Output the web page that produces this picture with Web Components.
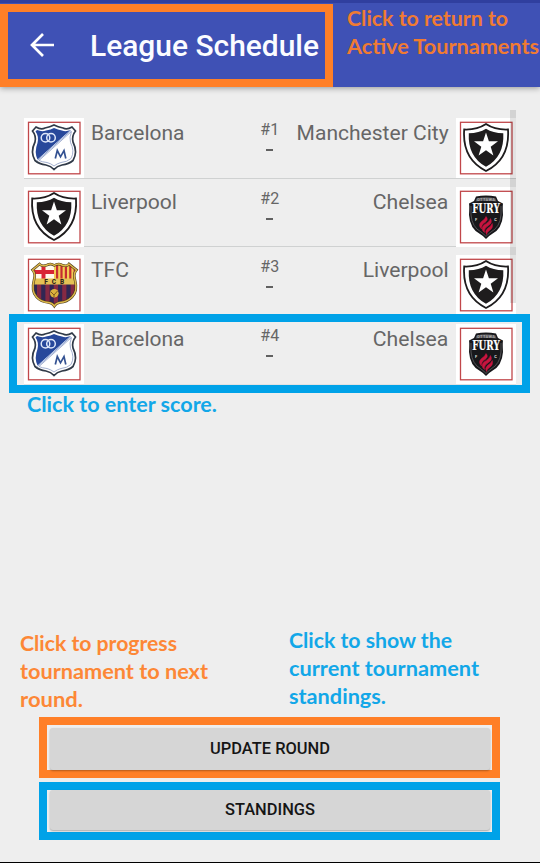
<!DOCTYPE html>
<html lang="en">
<head>
<meta charset="utf-8">
<title>League Schedule</title>
<style>
html,body{margin:0;padding:0;background:#eee}
body{font-family:Roboto,"Noto Sans",sans-serif;width:540px;height:863px;overflow:hidden}
</style>
</head>
<body>
<league-screen></league-screen>
<script>
const define = (name, html, init) => customElements.define(name, class extends HTMLElement {
  connectedCallback() {
    if (this.shadowRoot) return;
    const root = this.attachShadow({mode: 'open'});
    root.innerHTML = typeof html === 'function' ? html(this) : html;
    if (init) init(this, root);
  }
});

/* A single line of text, scaled horizontally to the width given in "w". */
define('fit-text', `<style>
:host{display:block;white-space:nowrap}
span{display:inline-block;transform-origin:0 50%}
:host([align=right]){text-align:right}
:host([align=right]) span{transform-origin:100% 50%}
</style><span><slot></slot></span>`, (el, root) => {
  const s = root.querySelector('span');
  const natural = s.offsetWidth, w = +el.getAttribute('w');
  if (w && natural) s.style.transform = `scaleX(${w / s.getBoundingClientRect().width})`;
});

/* Coloured annotation, one line per fit-text. */
define('hint-note', `<style>
:host{display:block;font:700 21.2px/28px Lato,"Open Sans",sans-serif;color:#ff7f27}
:host([tone=blue]){color:#00a2e8}
:host{opacity:.92}
</style><slot></slot>`);

define('call-out', `<style>
:host{display:block;box-sizing:border-box;border:8px solid #ff7f27}
:host([tone=blue]){border-color:#00a2e8}
</style><slot></slot>`);

const stripes = (x0, x1, y, h, w, c) => {
  let s = '';
  for (let x = x0; x < x1; x += w * 2) s += `<rect x="${x}" y="${y}" width="${w}" height="${h}" fill="${c}"/>`;
  return s;
};
const crests = {
  blue: `<path d="M12 9Q17 12 21 10Q26 9 30 7Q34 9 39 10Q43 12 48 9L51.500 13Q47.500 18 49 24Q54 34 49 42.500Q45 46 38 47Q33 48 30 51.500Q27 48 22 47Q15 46 11 42.500Q6 34 11 24Q12.500 18 8.500 13Z" fill="#fff" stroke="#303a48" stroke-width="1.700"/>
<path d="M13 12Q18 14 22 12.500Q27 11.500 30 10Q34 11.500 38 12.500Q42 14 46.500 12L13.500 41.500Q10 34 13.500 25Q15 18 11.500 13.500Z" fill="#27489b"/>
<path d="M47.500 13.500Q45 19 46.500 24.500Q51 33 47 40.500Q43 44 37 44.500Q33 45.500 30 48Q27 45.500 23 44.500Q18 44 15 42.500Z" fill="#fff" stroke="#8b9cc4" stroke-width=".8"/>
<path d="M47 12.500L13.500 42.500" stroke="#8aa0d0" stroke-width="1"/>
<g fill="none" stroke="#dfe8fa" stroke-width="1.500"><circle cx="21.500" cy="19.800" r="4.300"/><circle cx="27" cy="19.800" r="4.300"/></g>
<path d="M31.300 40.500L33.300 32.500L36.500 38.800L40 32.500L41.800 40.500" fill="none" stroke="#345292" stroke-width="1.700"/>`,
  star: `<path d="M8.200 11.500Q21 12 30 6Q39 12 52 11.500Q54 41 30 53Q6 41 8.200 11.500Z" fill="#fff" stroke="#1e1c1d" stroke-width="1.800"/>
<path d="M12.800 15.200Q23 15 30 10.700Q37 15 47.300 15.200Q48.500 38.500 30 48.800Q11.500 38.500 12.800 15.200Z" fill="#1e1c1d"/>
<path d="M30 14.500L32.900 23.200L42 23.300L34.700 28.700L37.400 37.400L30 32.200L22.600 37.400L25.300 28.700L18 23.300L27.100 23.200Z" fill="#fff"/>`,
  fury: `<path d="M20 9.500Q30 7.500 40 9.500L42 14L47 16.500Q46.500 20 47 28Q46 42 36 47Q32.500 49 30 52Q27.500 49 24 47Q14 42 13 28Q13.500 20 13 16.500L18 14Z" fill="#17171a"/>
<path d="M15 19V28Q16 40 25 45Q28 47 30 49.500Q32 47 35 45Q44 40 45 28V19" fill="none" stroke="#77777b" stroke-width=".6"/>
<path d="M20.500 11.500Q30 9 39.500 11.500L40.500 14.500Q30 13 19.500 14.500Z" fill="#55555a"/>
<text x="30" y="14" text-anchor="middle" font-family="Roboto,sans-serif" font-weight="700" font-size="4" textLength="18" fill="#aaa">OTTAWA</text>
<text x="30" y="25.800" text-anchor="middle" font-family="DejaVu Serif,serif" font-weight="700" font-size="12" textLength="27.500" lengthAdjust="spacingAndGlyphs" fill="#fff" stroke="#fff" stroke-width=".2">FURY</text>
<g font-family="Roboto,sans-serif" font-weight="700" font-size="4" fill="#ddd"><text x="19" y="34">F</text><text x="38.300" y="34">C</text></g>
<path d="M30 29.500Q33 32.500 29 35.500Q25 38 25.500 42Q21.500 38 25.500 34.500Q29.500 32 30 29.500ZM34.500 31.500Q37 35.500 32.500 38.500Q27.500 41.500 28.500 45.500Q24 42 28 38Q33.500 35 34.500 31.500ZM36.300 36.500Q37.500 41 33.500 43.500Q31 45 30.500 47.500Q28.500 44.500 31.500 41.500Q35.500 39 36.300 36.500Z" fill="#c8143f" stroke="#c8143f" stroke-width=".5"/>`,
  fcb: `<defs><clipPath id="c"><path d="M15.500 9Q18 12 23 10Q27 8 30.300 10.500Q34 8 38 10Q43 12 45 9L52.500 15Q49 19 51 25Q54 36 48 42Q43 47 36 47.500Q32 48 30.300 51Q28.500 48 24.500 47.500Q17 47 12.500 42Q7 36 10 25Q12 19 8.500 15Z"/></clipPath></defs>
<g clip-path="url(#c)"><rect width="60" height="60" fill="#fff8ea"/>
<path d="M19.500 8V25M8 17H30" stroke="#d82534" stroke-width="4"/>
<rect x="30" y="6" width="24" height="19" fill="#f3cc55"/>${stripes(32,53,6,19,2.2,'#c52d31')}
<rect y="28.500" width="60" height="25" fill="#302653"/>${stripes(13,50,28.500,25,4.2,'#852943')}
<rect y="23.500" width="60" height="6" fill="#e4c155"/></g>
<path d="M15.500 9Q18 12 23 10Q27 8 30.300 10.500Q34 8 38 10Q43 12 45 9L52.500 15Q49 19 51 25Q54 36 48 42Q43 47 36 47.500Q32 48 30.300 51Q28.500 48 24.500 47.500Q17 47 12.500 42Q7 36 10 25Q12 19 8.500 15Z" fill="none" stroke="#4b3a1b" stroke-width="2.600"/>
<path d="M15.500 9Q18 12 23 10Q27 8 30.300 10.500Q34 8 38 10Q43 12 45 9L52.500 15Q49 19 51 25Q54 36 48 42Q43 47 36 47.500Q32 48 30.300 51Q28.500 48 24.500 47.500Q17 47 12.500 42Q7 36 10 25Q12 19 8.500 15Z" fill="none" stroke="#dcb84b" stroke-width="1.500"/>
<text x="30.300" y="28.700" text-anchor="middle" font-family="Roboto,sans-serif" font-weight="900" font-size="6.500" textLength="20" fill="#30251b">FCB</text>
<circle cx="30.300" cy="38.300" r="4.300" fill="#dcb43d"/><path d="M27 37L30 40L33.500 36M30 40V42" fill="none" stroke="#74521e" stroke-width=".9"/>`
};

define('team-crest', el => `<style>
:host{display:block;width:60px;height:60px;flex:none;background:#fff}
svg{display:block}
</style><svg width="60" height="60" viewBox="0 0 60 60"><rect x="4.500" y="4.300" width="51.500" height="51.500" fill="none" stroke="#c1474a" stroke-width="1.300"/>${crests[el.getAttribute('kind')]}</svg>`);

define('match-row', el => { const a = n => el.getAttribute(n); return `<style>
:host{display:flex;box-sizing:border-box;height:68.660px;padding-top:8px;border-bottom:1px solid #cfd1d1;color:#666}
:host([last]){border-bottom-color:#e2e2e2}
.name{font-size:20.300px;line-height:31px;width:160px;flex:none}
.home{margin-left:7px}
.away{margin-right:7.500px}
.mid{flex:1;text-align:center;font-size:16px;line-height:20px;margin-top:2px;white-space:nowrap}
.dash{width:7px;height:2px;background:#606060;margin:9px auto 0}
</style>
<team-crest kind="${a('hc')}"></team-crest>
<fit-text class="name home" w="${a('hw')}">${a('home')}</fit-text>
<div class="mid">${a('no')}<div class="dash"></div></div>
<fit-text class="name away" align="right" w="${a('aw')}">${a('away')}</fit-text>
<team-crest kind="${a('ac')}"></team-crest>`; });

define('app-bar', `<style>
:host{display:block;box-sizing:border-box;height:87px;border-top:3px solid #303f9f;background:#3f51b5;box-shadow:0 1px 6px rgba(0,0,0,.38);color:#fbfcff}
.bar{display:flex;align-items:flex-start;height:84px}
call-out{width:333px;height:83px;margin-top:1px;flex:none}
.in{display:flex;align-items:center;height:67px}
svg{display:block;margin-left:20px;flex:none}
.title{margin-left:34px;font-weight:500;font-size:29.500px;line-height:40px;margin-top:1px}
hint-note{margin:1px 0 0 14px}
</style>
<div class="bar">
<call-out><div class="in">
<svg width="28" height="28" viewBox="0 0 28 28"><path d="M26 13H4M15 2L4 13L15 24" fill="none" stroke="#fff" stroke-width="2.700"/></svg>
<fit-text class="title" w="229">League Schedule</fit-text></div></call-out>
<hint-note><fit-text w="161">Click to return to</fit-text><fit-text w="192">Active Tournaments</fit-text></hint-note>
</div>`);

define('action-button', `<style>
:host{display:block}
button{display:block;box-sizing:border-box;width:100%;height:100%;border:0;padding:0;border-radius:3px;background:#d6d6d6;box-shadow:0 1px 2px rgba(0,0,0,.3);font:500 16.450px/40px Roboto,sans-serif;color:#151515}
</style><button><slot></slot></button>`);

define('league-screen', `<style>
:host{display:flex;flex-direction:column;box-sizing:border-box;width:540px;height:863px;background:#eee;border-bottom:1px solid #000;overflow:hidden}
.list{position:relative;height:274.640px;margin:23px 24px 0;flex:none}
.scroll{position:absolute;right:0;top:0;width:6px;height:193px;background:rgba(0,0,0,.11)}
.pick{position:absolute;left:-15px;top:204px;width:521px;height:79px}
.enter{margin:5.860px 0 0 27px}
.notes{display:flex;margin-top:208px;height:90.500px}
.left{margin-left:19.500px;width:269.500px;flex:none;padding-top:3px}
.actions{display:grid;gap:4px;margin-left:39px;width:461px}
call-out{padding:2px 2px 1px 3px}
.a{height:61px;padding-top:3px;padding-bottom:0}.b{height:58px;padding-top:0;padding-bottom:2px}
</style>
<app-bar></app-bar>
<div class="list">
<match-row no="#1" home="Barcelona" hw="93.500" hc="blue" away="Manchester City" aw="152" ac="star"></match-row>
<match-row no="#2" home="Liverpool" hw="86" hc="star" away="Chelsea" aw="75.500" ac="fury"></match-row>
<match-row no="#3" home="TFC" hw="38" hc="fcb" away="Liverpool" aw="86" ac="star"></match-row>
<match-row last no="#4" home="Barcelona" hw="93.500" hc="blue" away="Chelsea" aw="75.500" ac="fury"></match-row>
<div class="scroll"></div>
<call-out class="pick" tone="blue"></call-out>
</div>
<hint-note class="enter" tone="blue"><fit-text w="190">Click to enter score.</fit-text></hint-note>
<div class="notes">
<hint-note class="left"><fit-text w="157">Click to progress</fit-text><fit-text w="188">tournament to next</fit-text><fit-text w="63">round.</fit-text></hint-note>
<hint-note tone="blue"><fit-text w="163">Click to show the</fit-text><fit-text w="190">current tournament</fit-text><fit-text w="97">standings.</fit-text></hint-note>
</div>
<div class="actions">
<call-out class="a"><action-button style="height:42px">UPDATE ROUND</action-button></call-out>
<call-out class="b" tone="blue"><action-button style="height:40px">STANDINGS</action-button></call-out>
</div>`);
</script>
</body>
</html>
